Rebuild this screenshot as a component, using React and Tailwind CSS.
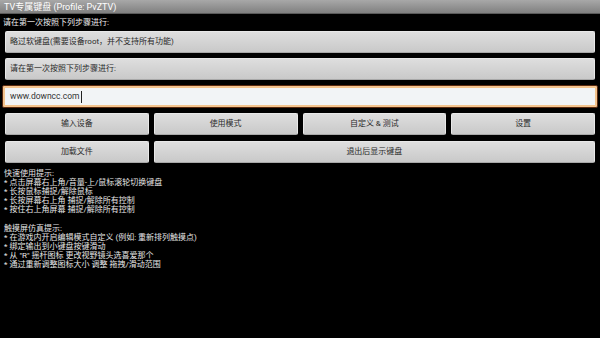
import React from 'react';

const font = { fontFamily: 'Roboto, "Noto Sans CJK SC", sans-serif' };

const Btn = ({ children, className = '', left = false }) => (
  <button
    className={`h-[22px] rounded-[2px] border border-[#e8e8e8] border-b-[#a8a8a8] bg-gradient-to-b from-[#dedede] to-[#c9c9c9] text-[8px] leading-none text-[#2a2a2a] ${left ? 'text-left pl-[4px]' : 'text-center'} ${className}`}
  >
    {children}
  </button>
);

const quickTips = [
  '* 点击屏幕右上角/音量-上/鼠标滚轮切换键盘',
  '* 长按鼠标捕捉/解除鼠标',
  '* 长按屏幕右上角 捕捉/解除所有控制',
  '* 按住右上角屏幕 捕捉/解除所有控制',
];

const touchTips = [
  '* 在游戏内开启编辑模式自定义 (例如: 重新排列触摸点)',
  '* 绑定输出到小键盘按键滑动',
  '* 从 "R" 摇杆图标 更改视野镜头选喜爱那个',
  '* 通过重新调整图标大小 调整 拖拽/滑动范围',
];

export default function App() {
  return (
    <div className="w-[600px] h-[338px] bg-black overflow-hidden" style={font}>
      <div className="h-[14px] bg-gradient-to-b from-[#a8a8a8] to-[#808080] border-b border-[#5a5a5a] pl-[4px] text-[9px] leading-[14px] text-white">
        TV专属键盘 (Profile: PvZTV)
      </div>

      <div className="pl-[3px] pt-[3px] h-[17px] text-[8px] leading-[12px] text-[#eeeeee]">
        请在第一次按照下列步骤进行:
      </div>

      <div className="flex flex-col px-[5px] gap-[5px]">
        <Btn left className="h-[22px] pl-[3px]">略过软键盘(需要设备root，并不支持所有功能)</Btn>
        <Btn left className="h-[22px] pl-[3px]">请在第一次按照下列步骤进行:</Btn>
      </div>

      <div className="px-[2px] mt-[5px]">
        <div className="h-[23px] rounded-[2px] border border-[#5a2a10] bg-[#f2f4f6] shadow-[inset_0_0_0_2px_#f4c48e] flex items-center pl-[7px] text-[8.5px] text-[#333]">
          www.downcc.com
          <span className="w-px h-[12px] bg-[#222] ml-px" />
        </div>
      </div>

      <div className="px-[5px] mt-[5px] grid grid-cols-4 gap-[5px]">
        <Btn>输入设备</Btn>
        <Btn>使用模式</Btn>
        <Btn>自定义 &amp; 测试</Btn>
        <Btn>设置</Btn>
        <Btn className="mt-px">加载文件</Btn>
        <Btn className="col-span-3 mt-px">退出后显示键盘</Btn>
      </div>

      <div className="pl-[4px] mt-[6px] text-[8px] leading-[9px] text-[#e6e6e6]">
        <div>快速使用提示:</div>
        {quickTips.map((t) => (
          <div key={t}>{t}</div>
        ))}
        <div className="h-[10px]" />
        <div>触摸屏仿真提示:</div>
        {touchTips.map((t) => (
          <div key={t}>{t}</div>
        ))}
      </div>
    </div>
  );
}
